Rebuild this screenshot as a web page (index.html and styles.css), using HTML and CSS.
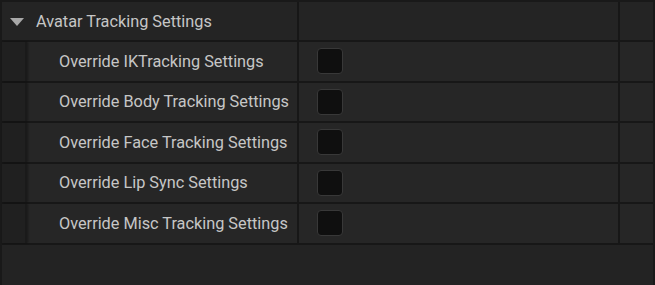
FILE: index.html
```html
<!DOCTYPE html>
<html>
<head>
<meta charset="utf-8">
<link rel="stylesheet" href="styles.css">
</head>
<body>
<div class="panel">
  <div class="row header">
    <div class="name-cell header-name">
      <span class="arrow"></span>
      <span class="label">Avatar Tracking Settings</span>
    </div>
    <div class="value-cell"></div>
    <div class="extra-cell"></div>
  </div>
  <div class="children">
    <div class="row child">
      <div class="indent"></div>
      <div class="name-cell child-name"><span class="label">Override IKTracking Settings</span></div>
      <div class="value-cell"><span class="checkbox"></span></div>
      <div class="extra-cell"></div>
    </div>
    <div class="row child">
      <div class="indent"></div>
      <div class="name-cell child-name"><span class="label">Override Body Tracking Settings</span></div>
      <div class="value-cell"><span class="checkbox"></span></div>
      <div class="extra-cell"></div>
    </div>
    <div class="row child">
      <div class="indent"></div>
      <div class="name-cell child-name"><span class="label">Override Face Tracking Settings</span></div>
      <div class="value-cell"><span class="checkbox"></span></div>
      <div class="extra-cell"></div>
    </div>
    <div class="row child">
      <div class="indent"></div>
      <div class="name-cell child-name"><span class="label">Override Lip Sync Settings</span></div>
      <div class="value-cell"><span class="checkbox"></span></div>
      <div class="extra-cell"></div>
    </div>
    <div class="row child">
      <div class="indent"></div>
      <div class="name-cell child-name"><span class="label">Override Misc Tracking Settings</span></div>
      <div class="value-cell"><span class="checkbox"></span></div>
      <div class="extra-cell"></div>
    </div>
  </div>
</div>
</body>
</html>
```
FILE: styles.css
```css
html, body {
  margin: 0;
  padding: 0;
  background: #232323;
}
body {
  width: 655px;
  height: 285px;
  overflow: hidden;
  font-family: Roboto, "Liberation Sans", sans-serif;
}
.panel {
  box-sizing: border-box;
  width: 655px;
  height: 285px;
  border: 2px solid #191919;
  border-bottom: none;
  background: #232323;
}
.row {
  display: flex;
  box-sizing: border-box;
  border-bottom: 2px solid #171717;
}
.header {
  height: 40px;
  background: #242424;
}
.child {
  height: 40.5px;
  background: #262626;
}
.name-cell {
  box-sizing: border-box;
  display: flex;
  align-items: center;
  border-right: 2px solid #171717;
}
.header-name {
  width: 297px;
  padding-left: 8px;
}
.indent {
  box-sizing: border-box;
  width: 25px;
  flex: none;
  background: #202020;
  border-right: 2px solid #1a1a1a;
  box-shadow: 1px 0 2px rgba(0,0,0,0.35);
}
.child-name {
  width: 272px;
  padding-left: 32px;
}
.value-cell {
  box-sizing: border-box;
  width: 321px;
  flex: none;
  display: flex;
  align-items: center;
  padding-left: 18px;
  border-right: 2px solid #171717;
}
.extra-cell {
  flex: 1;
}
.label {
  color: #c6c6c6;
  font-size: 16.3px;
  white-space: nowrap;
}
.arrow {
  width: 0;
  height: 0;
  border-left: 7px solid transparent;
  border-right: 7px solid transparent;
  border-top: 8px solid #a8a8a8;
  margin-right: 12px;
  margin-top: 1px;
}
.checkbox {
  box-sizing: border-box;
  width: 26px;
  height: 26px;
  border: 1.5px solid #383838;
  border-radius: 4px;
  background: #0f0f0f;
}
```
